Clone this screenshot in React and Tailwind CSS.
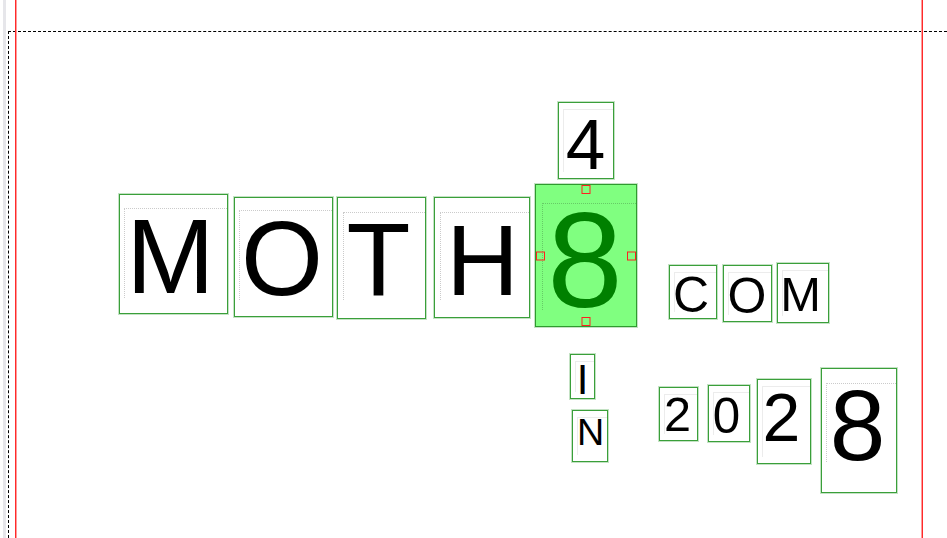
import React from "react";

const tiles = [
  { ch: "M", box: [119, 194, 227, 313], g: [133, 217, 207, 292], dot: [4, 13, 15] },
  { ch: "O", box: [234, 197, 332, 316], g: [245, 218, 318, 295], dot: [4, 12, 16] },
  { ch: "T", box: [337, 197, 425, 318], g: [352, 222, 404, 296], dot: [5, 14, 18] },
  { ch: "H", box: [434, 197, 529, 317], g: [452, 223, 512, 294], dot: [5, 14, 17] },
  { ch: "4", box: [558, 102, 613, 178], g: [567, 118, 603, 168] },
  { ch: "8", box: [535, 184, 636, 326], g: [552, 210, 617, 308], dot: [6, 18, 16], selected: true },
  { ch: "I", box: [570, 354, 594, 398], g: [580, 364, 584, 393] },
  { ch: "N", box: [572, 410, 607, 461], g: [578, 419, 602, 445] },
  { ch: "C", box: [669, 265, 716, 318], g: [673, 276, 708, 312] },
  { ch: "O", box: [723, 265, 771, 321], g: [729, 277, 764, 313] },
  { ch: "M", box: [777, 263, 828, 322], g: [783, 276, 817, 310] },
  { ch: "2", box: [659, 387, 697, 440], g: [666, 397, 688, 431] },
  { ch: "0", box: [708, 385, 749, 441], g: [713, 397, 739, 432] },
  { ch: "2", box: [757, 379, 810, 463], g: [764, 392, 798, 440] },
  { ch: "8", box: [821, 368, 896, 492], g: [832, 388, 882, 460], dot: [4, 14, 30] },
];

// visible glyph height as a share of the font size (Liberation Sans)
const heightShare = (ch) => {
  if (ch === "O" || ch === "C") return 0.74;
  if (ch === "8" || ch === "0") return 0.73;
  if (ch === "2") return 0.72;
  return 0.716;
};
const isRound = (ch) => "OC802".includes(ch);

const Tile = ({ tile }) => {
  const [x1, y1, x2, y2] = tile.box;
  const [gx1, gy1, gx2, gy2] = tile.g;
  const size = (gy2 - gy1 + 1) / heightShare(tile.ch);
  const baseline = gy2 + 1 - (isRound(tile.ch) ? 0.012 * size : 0);
  const spanTop = baseline - 0.8465 * size - y1 - 1;
  const center = (gx1 + gx2 + 1) / 2 - x1 - 1;

  return (
    <div
      className={`absolute border shadow-[0_0_0_1px_rgba(60,160,60,0.3)] ${
        tile.selected ? "border-[#2f9a2f] bg-[#80ff80]" : "border-[#3a9f3a] bg-white"
      }`}
      style={{ left: x1, top: y1, width: x2 - x1 + 1, height: y2 - y1 + 1 }}
    >
      {tile.dot ? (
        <div
          className="absolute right-0 border-t border-l border-dotted border-[rgba(0,0,0,0.2)]"
          style={{ left: tile.dot[0], top: tile.dot[1], bottom: tile.dot[2] }}
        />
      ) : (
        <div className="absolute left-[4px] top-[6px] right-0 bottom-[6px] border-t border-l border-[#ececec]" />
      )}
      <span
        className={`absolute leading-none text-center font-['Liberation_Sans',Arial,sans-serif] ${
          tile.selected ? "text-[#008000]" : "text-black"
        }`}
        style={{ top: spanTop, left: center - size, width: size * 2, fontSize: size }}
      >
        {tile.ch}
      </span>
      {tile.selected && (
        <>
          <div className="absolute left-1/2 -translate-x-1/2 top-0 w-[9px] h-[9px] border border-[#ff2020]" />
          <div className="absolute left-1/2 -translate-x-1/2 bottom-0 w-[9px] h-[9px] border border-[#ff2020]" />
          <div className="absolute top-1/2 -translate-y-1/2 left-0 w-[9px] h-[9px] border border-[#ff2020]" />
          <div className="absolute top-1/2 -translate-y-1/2 right-0 w-[9px] h-[9px] border border-[#ff2020]" />
        </>
      )}
    </div>
  );
};

export default function App() {
  return (
    <div className="relative w-[947px] h-[538px] overflow-hidden bg-white">
      {/* left scroll gutter */}
      <div className="absolute left-[3px] top-0 bottom-0 w-[3px] bg-[#e6e6ea]" />

      {/* page guides */}
      <div className="absolute left-[8px] top-[31px] right-0 bottom-0 border-t border-l border-dashed border-black" />
      <div className="absolute left-[15px] top-0 bottom-0 w-[2px] border-l border-[#ff2a2a] bg-[#ff9a9a]" />
      <div className="absolute left-[921px] top-0 bottom-0 w-[2px] border-r border-[#ff2a2a] bg-[#ff9a9a]" />

      {tiles.map((tile, i) => (
        <Tile key={i} tile={tile} />
      ))}
    </div>
  );
}
